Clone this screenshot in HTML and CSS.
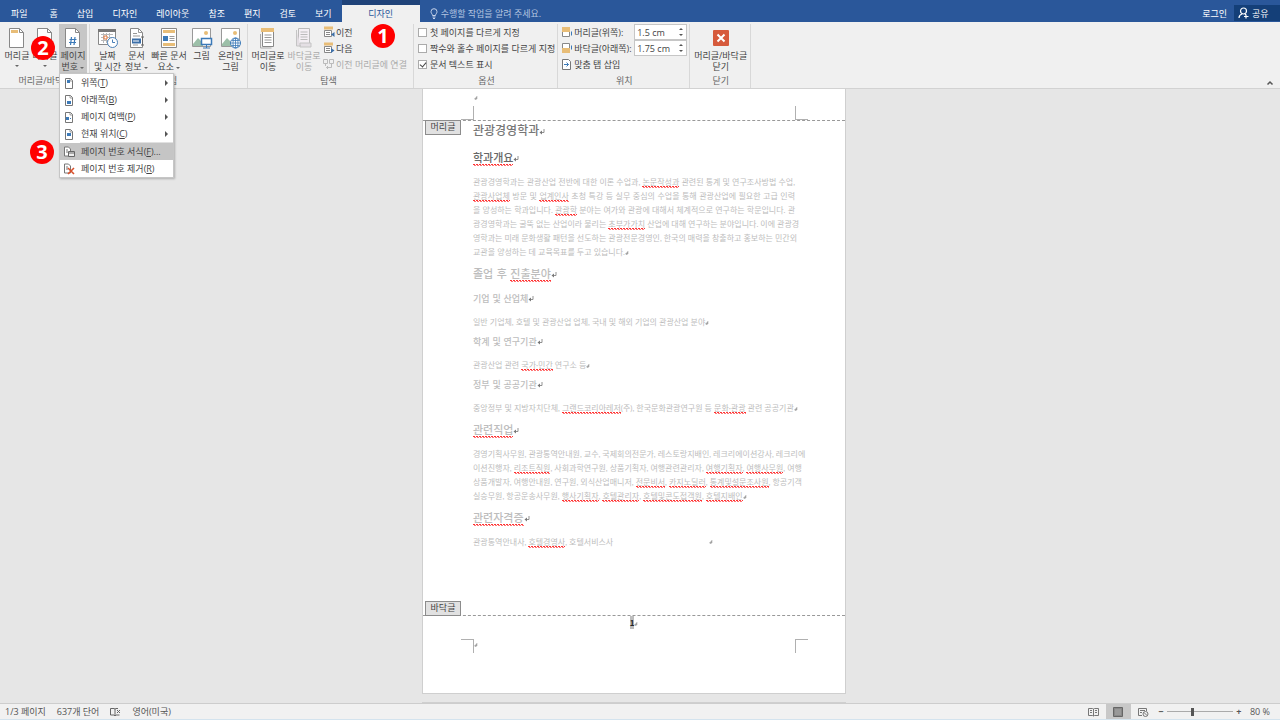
FILE: index.html
```html
<!DOCTYPE html>
<html lang="ko">
<head>
    <meta charset="UTF-8">
    <meta name="viewport" content="width=device-width, initial-scale=1.0">
    <title>관광경영학과</title>
    <link rel="stylesheet" href="styles.css">
</head>
<body>
    <svg class="sprite" aria-hidden="true">
        <symbol id="ret" viewBox="0 0 6 7"><path d="M5 1v3.500H2" fill="none" stroke="#777" stroke-width=".8"/><path d="M3 2.500L.5 4.500l2.500 2z" fill="#777"/></symbol>
        <symbol id="dot" viewBox="0 0 4 4"><path d="M3 0v3H1M2 1.500v2L.5 3z" fill="#999" stroke="#aaa" stroke-width=".6"/></symbol>
        <symbol id="mini" viewBox="0 0 12 12"><path d="M2.500 1.500h5l2 2v8h-7z" fill="#fff" stroke="#777"/><path d="M7 1.500v2.500h2.500" fill="none" stroke="#777" stroke-width=".7"/></symbol>
    </svg>

    <header class="tabbar">
        <nav class="tabs">
            <button class="file">파일</button>
            <button>홈</button>
            <button>삽입</button>
            <button>디자인</button>
            <button>레이아웃</button>
            <button>참조</button>
            <button>편지</button>
            <button>검토</button>
            <button>보기</button>
        </nav>
        <button class="tab-active">디자인</button>
        <button class="tellme">
            <svg width="8" height="11" viewBox="0 0 8 11" fill="none" stroke="#c5d3ea"><path d="M2.500 7.500C2.500 6 1 5.500 1 3.700a3 3 0 0 1 6 0C7 5.500 5.500 6 5.500 7.500zM2.500 9h3M3 10.500h2"/></svg>
            수행할 작업을 알려 주세요.
        </button>
        <div class="account">
            <button>로그인</button>
            <button class="share">
                <svg width="11" height="12" viewBox="0 0 11 12" fill="none" stroke="#fff" stroke-width="1.200"><circle cx="5.500" cy="4" r="3"/><path d="M1 11c0-2.500 1.500-3.500 3-4M7 7l1 1M8 7.500v4M6 9.500h4.500"/></svg>
                공유
            </button>
        </div>
    </header>

    <section class="ribbon">
        <div class="group">
            <div class="tools">
                <button class="tool">
                    <svg width="18" height="22" viewBox="0 0 18 22"><path d="M1.500 1.500h10l4 4v15h-14z" fill="#fff" stroke="#888"/><path d="M11.500 1.500v4h4" fill="none" stroke="#888"/><path d="M3 3h7v3H3z" fill="#e8bd77"/></svg>
                    <span>머리글<i class="caret"></i></span>
                </button>
                <button class="tool">
                    <svg width="18" height="22" viewBox="0 0 18 22"><path d="M1.500 1.500h10l4 4v15h-14z" fill="#fff" stroke="#888"/><path d="M11.500 1.500v4h4" fill="none" stroke="#888"/><path d="M3 15h11v4H3z" fill="#e8bd77"/></svg>
                    <span>바닥글<i class="caret"></i></span>
                </button>
                <button class="tool pressed">
                    <svg width="18" height="22" viewBox="0 0 18 22"><path d="M1.500 1.500h10l4 4v15h-14z" fill="#fff" stroke="#888"/><path d="M11.500 1.500v4h4" fill="none" stroke="#888"/><path d="M7.500 10l-1 8M11 10l-1 8M5.500 12.500h7M5 15.500h7" stroke="#3c7ab8" stroke-width="1.200"/></svg>
                    <span>페이지<br>번호 <i class="caret inline"></i></span>
                </button>
            </div>
            <div class="caption">머리글/바닥글</div>
        </div>

        <div class="group insert">
            <div class="tools">
                <button class="tool">
                    <svg width="20" height="22" viewBox="0 0 20 22"><path d="M.5 2.500h17v15H.5z" fill="#fff" stroke="#888"/><path d="M0 2h18v3H0z" fill="#777"/><path d="M3 7.500h12M3 10.500h12M3 13.500h8M5.500 6v10M8.500 6v10M11.500 6v8" stroke="#b9b9b9"/><path d="M6 9h3v3H6z" fill="#fff" stroke="#e0763c"/><circle cx="14.500" cy="15.500" r="5" fill="#fff" stroke="#4a80b8"/><path d="M14.500 12.500v3h2.500" fill="none" stroke="#4a80b8"/></svg>
                    <span>날짜<br>및 시간</span>
                </button>
                <button class="tool">
                    <svg width="18" height="22" viewBox="0 0 18 22"><path d="M2.500 1.500h8l4 4v15h-12z" fill="#fff" stroke="#888"/><path d="M10.500 1.500v4h4M5 6.500h4M5 9h7M5 18h5" fill="none" stroke="#999"/><path d="M4 11.500h9v5H4z" fill="#3c6fa8"/><path d="M5 14h6" stroke="#fff"/><path d="M13 10h3M13 18h3M14.500 10v8" stroke="#666"/></svg>
                    <span>문서<br>정보 <i class="caret inline"></i></span>
                </button>
                <button class="tool wide">
                    <svg width="18" height="22" viewBox="0 0 18 22"><path d="M1.500 1.500h15v19h-15z" fill="#fff" stroke="#888"/><path d="M3 3h12v3H3z" fill="#e8bd77"/><path d="M3 9h5v5H3z" fill="#3c7ab8"/><path d="M9.500 9.500h5M9.500 11.500h5M9.500 13.500h5" stroke="#999"/><path d="M3 16h12v3H3z" fill="#e8bd77"/></svg>
                    <span>빠른 문서<br>요소 <i class="caret inline"></i></span>
                </button>
                <button class="tool">
                    <svg width="22" height="22" viewBox="0 0 22 22"><path d="M1.500 1.500h18v18h-18z" fill="#fff" stroke="#999"/><circle cx="15" cy="6" r="2" fill="#e8bd77"/><path d="M2 17l5-6 5 5v3H2z" fill="#9cbfa8"/><path d="M10.500 11.500h10v6h-10z" fill="#fff" stroke="#3c7ab8" stroke-width="1.500"/><path d="M15.500 18v3M12 21h7" stroke="#3c7ab8"/></svg>
                    <span>그림</span>
                </button>
                <button class="tool">
                    <svg width="22" height="22" viewBox="0 0 22 22"><path d="M1.500 1.500h18v18h-18z" fill="#fff" stroke="#999"/><circle cx="15" cy="6" r="2" fill="#e8bd77"/><path d="M2 17l5-6 5 5v3H2z" fill="#9cbfa8"/><circle cx="15.500" cy="16" r="5" fill="#fff" stroke="#3c7ab8"/><path d="M10.500 16h10M15.500 11v10M12 13.500h7M12 18.500h7" stroke="#3c7ab8" stroke-width=".8"/><ellipse cx="15.500" cy="16" rx="2.500" ry="5" fill="none" stroke="#3c7ab8" stroke-width=".8"/></svg>
                    <span>온라인<br>그림</span>
                </button>
            </div>
            <div class="caption">삽입</div>
        </div>

        <div class="group navigate">
            <div class="tools">
                <button class="tool wide">
                    <svg width="18" height="22" viewBox="0 0 18 22"><path d="M3.500 3.500h11v16h-11z" fill="#fff" stroke="#888"/><path d="M2 1h13v4H2z" fill="#e8bd77"/><path d="M5.500 8h7M5.500 10.500h7M5.500 13h7M5.500 15.500h7" stroke="#999"/><path d="M1.500 7v14h11" fill="none" stroke="#aaa"/></svg>
                    <span>머리글로<br>이동</span>
                </button>
                <button class="tool wide" disabled>
                    <svg width="18" height="22" viewBox="0 0 18 22"><path d="M3.500 1.500h11v17h-11z" fill="#f4eff4" stroke="#bbb"/><path d="M5.500 5h7M5.500 7.500h7M5.500 10h7M5.500 12.500h7" stroke="#bbb"/><path d="M1.500 3v16h4M5 16h11v4H5z" fill="#e4dfe4" stroke="#c4c4c4"/></svg>
                    <span>바닥글로<br>이동</span>
                </button>
                <div class="rows">
                    <button>
                        <svg width="12" height="12" viewBox="0 0 12 12"><path d="M1.500 4.500h7v6h-7zM3 6.500h4M3 8.500h4" fill="#fff" stroke="#888"/><path d="M1 .500h9v3H1z" fill="#e8bd77"/><path d="M11.500 6v5L8 8.500z" fill="#3c6fa8"/></svg>
                        이전
                    </button>
                    <button>
                        <svg width="12" height="12" viewBox="0 0 12 12"><path d="M1.500 4.500h7v6h-7zM3 6.500h4M3 8.500h4" fill="#fff" stroke="#888"/><path d="M1 .500h9v3H1z" fill="#e8bd77"/><path d="M8 6v5l3.500-2.500z" fill="#3c6fa8"/></svg>
                        다음
                    </button>
                    <button disabled>
                        <svg width="12" height="12" viewBox="0 0 12 12" fill="none" stroke="#bbb"><path d="M.5 1.500h4v4h-4zM6.500 1.500h4v4h-4zM2.500 6v2M8.500 6v3.500h-5M5 8L3.500 9.500 5 11"/></svg>
                        이전 머리글에 연결
                    </button>
                </div>
            </div>
            <div class="caption">탐색</div>
        </div>

        <div class="group options">
            <div class="tools">
                <div class="rows">
                    <label><input type="checkbox"> 첫 페이지를 다르게 지정</label>
                    <label><input type="checkbox"> 짝수와 홀수 페이지를 다르게 지정</label>
                    <label><input type="checkbox" checked> 문서 텍스트 표시</label>
                </div>
            </div>
            <div class="caption">옵션</div>
        </div>

        <div class="group position">
            <div class="tools">
                <div class="rows">
                    <div class="field">
                        <svg width="12" height="12" viewBox="0 0 12 12"><path d="M1.500 1.500h7v9h-7z" fill="#fff" stroke="#888"/><path d="M1 1h8v5H1z" fill="#e8bd77"/><path d="M10.500 5.500v4" stroke="#3c7ab8"/></svg>
                        <label for="top">머리글(위쪽):</label>
                        <span class="spin"><input id="top" type="text" value="1.5 cm"><i class="up"></i><i class="down"></i></span>
                    </div>
                    <div class="field">
                        <svg width="12" height="12" viewBox="0 0 12 12"><path d="M1.500 1.500h7v9h-7z" fill="#fff" stroke="#888"/><path d="M1 6h8v5H1z" fill="#e8bd77"/><path d="M10.500 3.500v4" stroke="#3c7ab8"/></svg>
                        <label for="bottom">바닥글(아래쪽):</label>
                        <span class="spin"><input id="bottom" type="text" value="1.75 cm"><i class="up"></i><i class="down"></i></span>
                    </div>
                    <button>
                        <svg width="12" height="12" viewBox="0 0 12 12"><path d="M1.500 1.500h6l2 2v8h-8z" fill="#fff" stroke="#777"/><path d="M3 6.500h4.500M5.500 4.500l2 2-2 2" fill="none" stroke="#3c7ab8"/></svg>
                        맞춤 탭 삽입
                    </button>
                </div>
            </div>
            <div class="caption">위치</div>
        </div>

        <div class="group close">
            <div class="tools">
                <button class="tool">
                    <svg width="16" height="22" viewBox="0 0 16 22"><rect y="3" width="16" height="16" rx="1" fill="#d65a3c"/><path d="M4.500 7.500l7 7M11.500 7.500l-7 7" stroke="#fff" stroke-width="2"/></svg>
                    <span>머리글/바닥글<br>닫기</span>
                </button>
            </div>
            <div class="caption">닫기</div>
        </div>

        <button class="collapse" aria-label="리본 메뉴 축소">
            <svg width="8" height="6" viewBox="0 0 8 6"><path d="M1.500 4.500L4 2l2.500 2.500" fill="none" stroke="#555" stroke-width="1.500"/></svg>
        </button>

        <div class="menu">
            <button>
                <svg width="12" height="12"><use href="#mini"/><path d="M4 3h3v3H4z" fill="#3c7ab8"/></svg>
                <span>위쪽(<u>T</u>)</span><i class="arrow"></i>
            </button>
            <button>
                <svg width="12" height="12"><use href="#mini"/><path d="M4 7h4v3H4z" fill="#3c7ab8"/></svg>
                <span>아래쪽(<u>B</u>)</span><i class="arrow"></i>
            </button>
            <button>
                <svg width="12" height="12"><use href="#mini"/><path d="M3 6h3v3H3zM7 7h1v1H7z" fill="#3c7ab8"/></svg>
                <span>페이지 여백(<u>P</u>)</span><i class="arrow"></i>
            </button>
            <button>
                <svg width="12" height="12"><use href="#mini"/><path d="M4 5h4v3H4z" fill="#3c7ab8"/></svg>
                <span>현재 위치(<u>C</u>)</span><i class="arrow"></i>
            </button>
            <hr>
            <button class="selected">
                <svg width="12" height="12" viewBox="0 0 12 12"><path d="M1.500 1h4l2 2v7h-6z" fill="#fff" stroke="#777"/><path d="M3 4h2M3 6h2" stroke="#777"/><path d="M5.500 5.500h6v5h-6zM5.500 7h6" fill="#eee" stroke="#666"/></svg>
                <span>페이지 번호 서식(<u>F</u>)...</span>
            </button>
            <button>
                <svg width="12" height="12" viewBox="0 0 12 12"><path d="M1.500 1h4l2 2v7h-6z" fill="#fff" stroke="#777"/><path d="M3 4h2M3 6h2" stroke="#777"/><path d="M5 5l6 6M11 5l-6 6" stroke="#d8502c" stroke-width="1.600"/></svg>
                <span>페이지 번호 제거(<u>R</u>)</span>
            </button>
        </div>
    </section>

    <main class="workspace">
        <article class="page">
            <div class="page-top">
                <i class="crop"></i>
                <svg class="mark" width="4" height="4"><use href="#dot"/></svg>
                <i class="crop right"></i>
            </div>
            <div class="page-body">
                <span class="tag head">머리글</span>
                <h1>관광경영학과<svg width="6" height="7"><use href="#ret"/></svg></h1>
                <h2 class="dark"><span class="err">학과개요</span><svg width="6" height="7"><use href="#ret"/></svg></h2>
                <p>
                    <span class="line">관광경영학과는 관광산업 전반에 대한 이론 수업과, <span class="err">논문작성과</span> 관련된 통계 및 연구조사방법 수업,</span>
                    <span class="line"><span class="err">관광사업체</span> 방문 및 <span class="err">업계인사</span> 초청 특강 등 실무 중심의 수업을 통해 관광산업에 필요한 고급 인력</span>
                    <span class="line">을 양성하는 학과입니다. <span class="err">관광학</span> 분야는 여가와 관광에 대해서 체계적으로 연구하는 학문입니다. 관</span>
                    <span class="line">광경영학과는 굴뚝 없는 산업이라 불리는 <span class="err">초부가가치</span> 산업에 대해 연구하는 분야입니다. 이에 관광경</span>
                    <span class="line">영학과는 미래 문화생활 패턴을 선도하는 관광전문경영인, 한국의 매력을 창출하고 홍보하는 민간외</span>
                    <span class="line last">교관을 양성하는 데 교육목표를 두고 있습니다.<svg width="4" height="4"><use href="#dot"/></svg></span>
                </p>
                <h2>졸업 후 <span class="err">진출분야</span><svg width="6" height="7"><use href="#ret"/></svg></h2>
                <h3>기업 및 산업체<svg width="6" height="7"><use href="#ret"/></svg></h3>
                <p>일반 기업체, 호텔 및 관광산업 업체, 국내 및 해외 기업의 관광산업 분야<svg width="4" height="4"><use href="#dot"/></svg></p>
                <h3>학계 및 연구기관<svg width="6" height="7"><use href="#ret"/></svg></h3>
                <p>관광산업 관련 <span class="err">국가·민간</span> 연구소 등<svg width="4" height="4"><use href="#dot"/></svg></p>
                <h3>정부 및 공공기관<svg width="6" height="7"><use href="#ret"/></svg></h3>
                <p><span class="line">중앙정부 및 지방자치단체, <span class="err">그랜드코리아레저</span>(주), 한국문화관광연구원 등 <span class="err">문화·관광</span> 관련 공공기관<svg width="4" height="4"><use href="#dot"/></svg></span></p>
                <h2><span class="err">관련직업</span><svg width="6" height="7"><use href="#ret"/></svg></h2>
                <p>
                    <span class="line">경영기획사무원, 관광통역안내원, 교수, 국제회의전문가, 레스토랑지배인, 레크리에이션강사, 레크리에</span>
                    <span class="line">이션진행자, <span class="err">리조트직원</span>, 사회과학연구원, 상품기획자, 여행관련관리자, <span class="err">여행기획자</span>, <span class="err">여행사무원</span>, 여행</span>
                    <span class="line">상품개발자, 여행안내원, 연구원, 외식산업매니저, <span class="err">전문비서</span>, <span class="err">카지노딜러</span>, <span class="err">통계및설문조사원</span>, 항공기객</span>
                    <span class="line last">실승무원, 항공운송사무원, <span class="err">행사기획자</span>, <span class="err">호텔관리자</span>, <span class="err">호텔및콘도접객원</span>, <span class="err">호텔지배인</span><svg width="4" height="4"><use href="#dot"/></svg></span>
                </p>
                <h2><span class="err">관련자격증</span><svg width="6" height="7"><use href="#ret"/></svg></h2>
                <p class="certs"><span>관광통역안내사, <span class="err">호텔경영사</span>, 호텔서비스사</span><svg width="4" height="4"><use href="#dot"/></svg></p>
                <span class="tag foot">바닥글</span>
            </div>
            <footer class="page-foot">
                <div class="number"><b>1</b><svg width="4" height="4"><use href="#dot"/></svg></div>
                <div class="crops">
                    <i class="crop"></i>
                    <svg class="mark" width="4" height="4"><use href="#dot"/></svg>
                    <i class="crop right"></i>
                </div>
            </footer>
        </article>
        <div class="page next"></div>
    </main>

    <footer class="status">
        <span>1/3 페이지</span>
        <span>637개 단어</span>
        <svg width="11" height="10" viewBox="0 0 11 10" fill="none" stroke="#666"><path d="M5 2v7M5 2L4 1.500H.5v6.500H4l1 1 1-1h3.500M5 2l1-.5h2M7 3l3 3M10 3L7 6"/></svg>
        <span>영어(미국)</span>
        <div class="views">
            <button aria-label="읽기 모드"><svg width="11" height="10" viewBox="0 0 11 10" fill="none" stroke="#777"><path d="M5.500 2v7M5.500 2l-1-.5h-4v7h4l1 .5 1-.5h4v-7h-4zM2 3.500h2M2 5.500h2M7 3.500h2M7 5.500h2"/></svg></button>
            <button class="on" aria-label="인쇄 모양"><svg width="10" height="10" viewBox="0 0 10 10"><path d="M.5.5h9v9h-9z" fill="#888" stroke="#666"/><path d="M2 3h6M2 5h6M2 7h6" stroke="#aaa"/></svg></button>
            <button aria-label="웹 모양"><svg width="11" height="10" viewBox="0 0 11 10" fill="none" stroke="#777"><path d="M4 8.500H.5v-7h8V4M2 3.500h5M2 5.500h2"/><circle cx="7.500" cy="7" r="2.500"/><path d="M6 5.500l3 3"/></svg></button>
        </div>
        <div class="zoom">
            <button aria-label="축소">−</button>
            <input type="range" min="10" max="190" value="80" aria-label="확대/축소">
            <button aria-label="확대">+</button>
            <span>80 %</span>
        </div>
    </footer>

    <div class="step one">1</div>
    <div class="step two">2</div>
    <div class="step three">3</div>
</body>
</html>
```

FILE: styles.css
```css
* {
    box-sizing: border-box;
}

body {
    margin: 0;
    height: 100vh;
    display: flex;
    flex-direction: column;
    overflow: hidden;
    font-family: 'Open Sans', 'Noto Sans CJK KR', sans-serif;
    font-size: 9px;
    line-height: 11px;
    color: #444;
    background-color: #e6e6e6;
}

button,
input {
    font: inherit;
    color: inherit;
    margin: 0;
    padding: 0;
    border: none;
    background: none;
}

button,
label {
    white-space: nowrap;
}

svg {
    flex: none;
}

.sprite {
    position: absolute;
    width: 0;
    height: 0;
}

/* tabs */
.tabbar {
    display: flex;
    height: 22px;
    flex: none;
    padding-top: 5px;
    background-color: #2a579a;
    color: #fff;
}

.tabs {
    display: flex;
    gap: 19px;
    padding: 0 10px 0 11px;
}

.tabs .file {
    margin-right: 3px;
}

.tab-active {
    width: 78px;
    background-color: #f0f0f0;
    color: #2a579a;
    box-shadow: 0 -5px #204379;
}

.tellme {
    display: flex;
    align-items: center;
    gap: 3px;
    padding-left: 10px;
    color: #b4c5e0;
}

.account {
    display: flex;
    margin-left: auto;
    gap: 7px;
}

.share {
    display: flex;
    align-items: center;
    gap: 3px;
    width: 46px;
    height: 16px;
    padding-left: 4px;
    background-color: #143f78;
}

/* ribbon */
.ribbon {
    position: relative;
    display: flex;
    flex: none;
    height: 67px;
    padding-top: 2px;
    background-color: #f0f0f0;
    border-bottom: 1px solid #d2d2d2;
}

.group {
    display: flex;
    flex-direction: column;
    justify-content: space-between;
    padding: 0 2px 0 3px;
    border-right: 1px solid #d8d8d8;
}

.tools {
    display: flex;
    height: 50px;
}

.caption {
    text-align: center;
    color: #666;
    height: 13px;
}

.tool {
    display: flex;
    flex-direction: column;
    align-items: center;
    gap: 1px;
    width: 28px;
    padding-top: 3px;
}

.insert .tool {
    width: 29px;
}

.tool.wide,
.insert .tool.wide {
    width: 36px;
}

.close .tool {
    width: 55px;
}

.pressed {
    background-color: #c6c6c6;
}

.tool span {
    display: block;
}

button:disabled {
    color: #aaa;
}

.caret {
    display: block;
    width: 4px;
    margin: 4px auto 0;
    border: 2px solid transparent;
    border-top-color: #666;
}

.caret.inline {
    display: inline-block;
    margin: 0;
    vertical-align: -1px;
}

.rows {
    display: flex;
    flex-direction: column;
}

.rows button,
.rows label,
.field {
    display: flex;
    align-items: center;
    gap: 1px;
    height: 16px;
}

.navigate {
    padding: 0 6px 0 2px;
}

.navigate .rows {
    padding-left: 1px;
}

.options {
    padding: 0 2px 0 4px;
}

.options .rows label {
    gap: 3px;
}

.options input {
    appearance: none;
    width: 9px;
    height: 9px;
    background-color: #fff;
    border: 1px solid #ababab;
}

.options input:checked::after {
    content: "";
    display: block;
    width: 3px;
    height: 5px;
    margin: 0 2px;
    border: solid #444;
    border-width: 0 1px 1px 0;
    transform: rotate(40deg);
}

.position .rows {
    width: 126px;
}

.spin {
    position: relative;
    width: 53px;
    margin-left: auto;
}

.spin input {
    display: block;
    width: 100%;
    height: 16px;
    padding-left: 2px;
    background-color: #fff;
    border: 1px solid #c6c6c6;
}

.up,
.down {
    position: absolute;
    right: 4px;
    border: 2px solid transparent;
}

.up {
    top: 2px;
    border-bottom-color: #555;
}

.down {
    bottom: 2px;
    border-top-color: #555;
}

.collapse {
    align-self: flex-end;
    margin: 0 6px 0 auto;
}

/* drop-down menu */
.menu {
    position: absolute;
    z-index: 1;
    top: 51px;
    left: 59px;
    width: 115px;
    background-color: #fff;
    border: 1px solid #c6c6c6;
    box-shadow: 1px 1px 2px rgba(0, 0, 0, 0.25);
}

.menu button {
    display: flex;
    align-items: center;
    gap: 6px;
    width: 100%;
    height: 17px;
    padding: 0 5px 0 3px;
    text-align: left;
}

.menu hr {
    margin: 0 0 0 20px;
    border: none;
    border-top: 1px solid #e1e1e1;
}

.menu .selected {
    background-color: #c5c5c5;
}

.arrow {
    margin-left: auto;
    border: solid transparent;
    border-width: 3px 0 3px 3px;
    border-left-color: #555;
}

/* document */
.workspace {
    flex: 1;
    min-height: 0;
    overflow: hidden;
}

.page {
    width: 424px;
    margin: 0 auto;
    position: relative;
    left: -6px;
    background-color: #fff;
    border: 1px solid #cfcfcf;
    border-top: none;
    font-family: 'Noto Sans CJK KR', sans-serif;
}

.page.next {
    height: 20px;
    margin-top: 8px;
    border-top: 1px solid #cfcfcf;
}

.page-top {
    display: flex;
    justify-content: space-between;
    position: relative;
    padding: 17px 37px 0 38px;
}

.crop {
    width: 13px;
    height: 14px;
    border: solid #b0b0b0;
    border-width: 0 1px 1px 0;
}

.crop.right {
    border-width: 0 0 1px 1px;
}

.mark {
    position: absolute;
    top: 7px;
    left: 51px;
}

.page-body {
    position: relative;
    min-height: 496px;
    padding: 0 50px;
    border: dashed #999;
    border-width: 1px 0;
    display: flow-root;
    color: #bdbdbd;
}

.tag {
    position: absolute;
    left: 2px;
    width: 36px;
    height: 15px;
    line-height: 12px;
    text-align: center;
    color: #444;
    background-color: #e1e1e1;
    border: 1px solid #8c8c8c;
}

.tag.head {
    top: -1px;
}

.tag.foot {
    bottom: -1px;
}

h1,
h2,
h3 {
    font-family: 'DejaVu Sans', 'Noto Sans CJK KR', sans-serif;
    font-weight: 500;
}

h1 {
    margin: 0 0 6px;
    font-size: 12px;
    line-height: 21px;
    color: #777;
}

h2 {
    margin: 5px 0;
    font-size: 11px;
    line-height: 22px;
}

h2.dark {
    color: #666;
}

h3 {
    margin: 5px 0 8px;
    font-size: 9px;
    line-height: 16px;
}

p {
    margin: 0;
    font-family: 'Lato', 'Noto Sans CJK KR', sans-serif;
    font-size: 8px;
    line-height: 14px;
    white-space: nowrap;
}

.line {
    display: block;
    text-align-last: justify;
}

.line.last {
    text-align-last: left;
}

/* spelling squiggle */
.err {
    padding-bottom: 1px;
    background-image: repeating-linear-gradient(90deg, #f33 0 2px, transparent 2px 3px), repeating-linear-gradient(90deg, transparent 0 1px, #f77 1px 3px);
    background-size: 100% 1px, 100% 1px;
    background-position: 0 calc(100% - 1px), 0 100%;
    background-repeat: no-repeat;
}

.certs {
    display: flex;
    align-items: center;
    justify-content: space-between;
    padding-right: 82px;
}

.page-foot {
    height: 77px;
}

.number {
    text-align: center;
    height: 23px;
}

.number b {
    display: inline-block;
    height: 13px;
    line-height: 13px;
    font-size: 8px;
    color: #222;
    background-color: #bdbdbd;
}

.crops {
    display: flex;
    justify-content: space-between;
    position: relative;
    padding: 0 37px 0 38px;
}

.crops .crop {
    border-width: 1px 1px 0 0;
}

.crops .crop.right {
    border-width: 1px 0 0 1px;
}

.crops .mark {
    top: 4px;
}

/* status bar */
.status {
    display: flex;
    align-items: center;
    flex: none;
    height: 17px;
    gap: 11px;
    padding-left: 5px;
    background-color: #f1f1f1;
    border-top: 1px solid #cdcdcd;
    border-bottom: 1px solid #d3e3ee;
    color: #555;
}

.views {
    display: flex;
    margin-left: auto;
}

.views button {
    display: flex;
    align-items: center;
    justify-content: center;
    width: 25px;
    height: 15px;
}

.views .on {
    background-color: #c8c8c8;
}

.zoom {
    display: flex;
    align-items: center;
    gap: 3px;
    padding-right: 10px;
    margin-left: -9px;
}

.zoom button {
    width: 6px;
    font-weight: 700;
}

.zoom span {
    margin-left: 5px;
}

.zoom input {
    appearance: none;
    width: 66px;
    height: 9px;
    background: linear-gradient(#aaa, #aaa) center / 100% 1px no-repeat;
}

.zoom input::-webkit-slider-thumb {
    appearance: none;
    width: 3px;
    height: 8px;
    background-color: #555;
}

/* numbered callouts */
.step {
    position: absolute;
    z-index: 2;
    width: 24px;
    height: 24px;
    border-radius: 50%;
    background-color: #f00;
    color: #fff;
    font: bold 20px/24px 'Noto Sans', sans-serif;
    text-align: center;
}

.one {
    top: 24px;
    left: 371px;
}

.two {
    top: 36px;
    left: 31px;
}

.three {
    top: 140px;
    left: 30px;
}
```
